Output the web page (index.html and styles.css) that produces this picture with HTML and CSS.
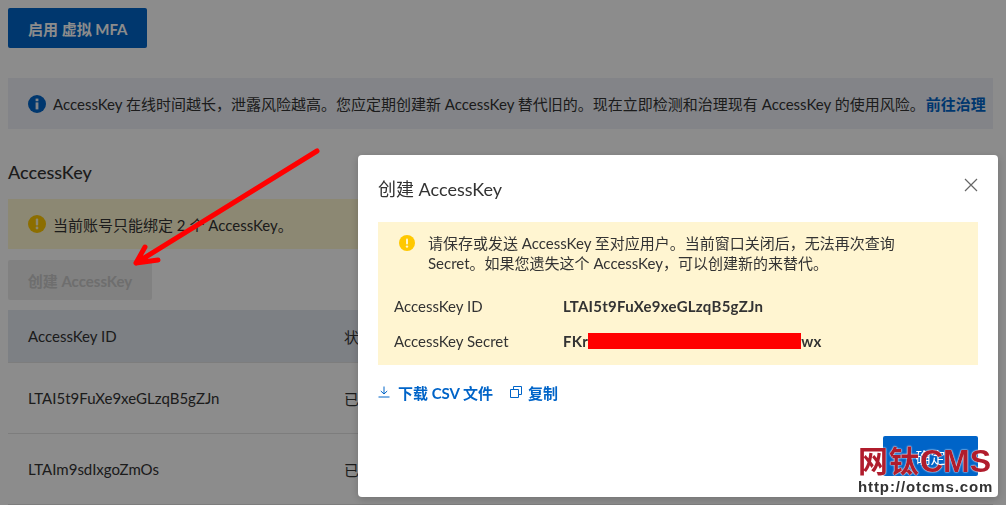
FILE: index.html
```html
<!DOCTYPE html>
<html lang="en">
<head>
    <meta charset="UTF-8">
    <meta name="viewport" content="width=device-width, initial-scale=1.0">
    <title>创建 AccessKey</title>
    <link rel="stylesheet" href="styles.css">
</head>
<body>
    <div class="page">
        <button class="btn btn-primary">启用 虚拟 MFA</button>
        <div class="notice notice-info">
            <svg class="notice-icon" viewBox="0 0 18 18"><circle cx="9" cy="9" r="9" fill="#0064c8"/><rect x="7.6" y="7.4" width="2.8" height="7" fill="#f0f3f9"/><rect x="7.6" y="3.6" width="2.8" height="2.6" fill="#f0f3f9"/></svg>
            <span>AccessKey 在线时间越长，泄露风险越高。您应定期创建新 AccessKey 替代旧的。现在立即检测和治理现有 AccessKey 的使用风险。</span>
            <a class="notice-link">前往治理</a>
        </div>
        <h2 class="section-title">AccessKey</h2>
        <div class="notice notice-warn">
            <svg class="notice-icon" viewBox="0 0 18 18"><circle cx="9" cy="9" r="9" fill="#ffc800"/><rect x="7.8" y="3.6" width="2.4" height="7" rx="1" fill="#fff7d1"/><circle cx="9" cy="13" r="1.4" fill="#fff7d1"/></svg>
            <span>当前账号只能绑定 2 个 AccessKey。</span>
        </div>
        <button class="btn btn-disabled">创建 AccessKey</button>
        <div class="table">
            <div class="table-row table-head"><span class="col-id">AccessKey ID</span><span>状态</span></div>
            <div class="table-row"><span class="col-id">LTAI5t9FuXe9xeGLzqB5gZJn</span><span>已启用</span></div>
            <div class="table-row"><span class="col-id">LTAIm9sdIxgoZmOs</span><span>已启用</span></div>
        </div>
    </div>

    <div class="mask"></div>

    <div class="dialog">
        <div class="dialog-head">
            <span class="dialog-title">创建 AccessKey</span>
            <svg class="dialog-close" viewBox="0 0 14 14"><path d="M1 1 L13 13 M13 1 L1 13" stroke="#666" stroke-width="1.2" fill="none"/></svg>
        </div>
        <div class="key-box">
            <div class="key-msg">
                <svg class="key-icon" viewBox="0 0 16 16"><circle cx="8" cy="8" r="8" fill="#ffc800"/><rect x="7" y="3.4" width="2" height="6" rx="1" fill="#fff5d1"/><circle cx="8" cy="11.6" r="1.2" fill="#fff5d1"/></svg>
                <p>请保存或发送 AccessKey 至对应用户。当前窗口关闭后，无法再次查询 Secret。如果您遗失这个 AccessKey，可以创建新的来替代。</p>
            </div>
            <div class="key-row"><span class="key-label">AccessKey ID</span><b class="key-value">LTAI5t9FuXe9xeGLzqB5gZJn</b></div>
            <div class="key-row"><span class="key-label">AccessKey Secret</span><b class="key-value">FKr<i class="redact"></i>wx</b></div>
        </div>
        <div class="dialog-links">
            <a class="dl-link">
                <svg class="dl-icon" viewBox="0 0 12 12"><path d="M6 0.5 V8 M2.8 5 L6 8 L9.2 5 M0.5 11 H11.5" stroke="#0064c8" fill="none"/></svg>
                下载 CSV 文件
            </a>
            <a class="dl-link dl-link-copy">
                <svg class="dl-icon" viewBox="0 0 12 12"><path d="M3.5 3 V0.5 H11.5 V8.5 H9 M0.5 3.5 H8.5 V11.5 H0.5 Z" stroke="#0064c8" fill="none"/></svg>
                复制
            </a>
        </div>
        <div class="dialog-foot"><button class="btn btn-ok">确定</button></div>
    </div>

    <svg class="arrow" viewBox="0 0 1006 505"><path d="M317 151 L136 263 M136 263 L145 247 M136 263 L158 260" stroke="#ff0000" stroke-width="5" stroke-linecap="round" stroke-linejoin="round" fill="none"/></svg>

    <div class="watermark">
        <div class="wm-logo"><span class="wm-cn">网钛</span>CMS</div>
        <div class="wm-url">http://otcms.com</div>
    </div>
</body>
</html>
```

FILE: styles.css
```css
* {
    box-sizing: border-box;
}

html, body {
    height: 100%;
}

body {
    margin: 0;
    overflow: hidden;
    background: #fff;
    color: #333;
    font-family: Lato, "Noto Sans CJK SC", sans-serif;
    font-size: 15px;
}

.page {
    padding: 8px 0 0 8px;
    width: 993px;
}

.btn {
    display: block;
    height: 40px;
    border: 0;
    border-radius: 2px;
    padding: 0 20px;
    font-family: inherit;
    font-size: 15px;
    font-weight: 700;
    white-space: nowrap;
}

.btn-primary {
    width: 139px;
    background: #0064c8;
    color: #fff;
}

.btn-disabled {
    width: 144px;
    margin-top: 11px;
    padding: 0;
    background: #ebebeb;
    color: #c8c8c8;
}

.notice {
    display: flex;
    align-items: center;
    height: 51px;
    padding-left: 20px;
}

.notice-info {
    margin-top: 30px;
    background: #eef1f8;
    white-space: nowrap;
}

.notice-warn {
    height: 50px;
    background: #fff7d1;
}

.notice-icon {
    width: 18px;
    height: 18px;
    margin-right: 7px;
    flex: none;
}

.notice-link {
    margin-left: 1px;
    color: #0064c8;
    font-weight: 700;
}

.section-title {
    margin: 30px 0 14px;
    height: 26px;
    font-size: 18px;
    line-height: 26px;
    font-weight: 500;
}

.table {
    margin-top: 10px;
}

.table-row {
    display: flex;
    align-items: center;
    height: 71px;
    padding-left: 20px;
    border-bottom: 1px solid #e3e3e3;
}

.table-head {
    height: 53px;
    background: #e4e9f1;
}

.col-id {
    width: 316px;
}

.mask {
    position: fixed;
    inset: 0;
    background: rgba(0, 0, 0, 0.45);
}

.dialog {
    position: fixed;
    left: 358px;
    top: 155px;
    width: 640px;
    height: 342px;
    padding: 20px;
    border-radius: 4px;
    background: #fff;
    box-shadow: 0 2px 8px rgba(0, 0, 0, 0.2);
}

.dialog-head {
    display: flex;
    justify-content: space-between;
    align-items: center;
    height: 30px;
    margin-bottom: 17px;
}

.dialog-title {
    font-size: 18px;
    margin-top: -4px;
}

.dialog-close {
    width: 14px;
    height: 14px;
    margin-top: -10px;
}

.key-box {
    height: 143px;
    padding: 11px 16px 0;
    background: #fff5d1;
}

.key-msg {
    display: flex;
    height: 55px;
}

.key-icon {
    width: 16px;
    height: 16px;
    margin: 2px 0 0 5px;
    flex: none;
}

.key-msg p {
    margin: 0 0 0 13px;
    width: 500px;
    line-height: 20px;
}

.key-row {
    display: flex;
    align-items: center;
    height: 35px;
}

.key-label {
    width: 169px;
}

.key-value {
    display: flex;
    align-items: center;
    letter-spacing: 0.25px;
}

.redact {
    display: block;
    width: 213px;
    height: 16px;
    background: #f00;
}

.dialog-links {
    display: flex;
    gap: 17px;
    margin-top: 17px;
    height: 20px;
    align-items: center;
}

.dl-link {
    display: flex;
    align-items: center;
    gap: 8px;
    color: #0064c8;
    font-weight: 700;
}

.dl-link-copy {
    gap: 6px;
}

.dl-icon {
    width: 12px;
    height: 12px;
    flex: none;
}

.dialog-foot {
    display: flex;
    justify-content: flex-end;
    margin-top: 34px;
}

.btn-ok {
    width: 95px;
    background: #0064c8;
    color: #fff;
    font-weight: 400;
}

.arrow {
    position: fixed;
    left: 0;
    top: 0;
    width: 1006px;
    height: 505px;
}

.watermark {
    position: fixed;
    left: 858px;
    top: 442px;
    width: 136px;
}

.wm-logo {
    height: 37px;
    font-family: "Liberation Sans", sans-serif;
    font-size: 32px;
    font-weight: 700;
    line-height: 34px;
    white-space: nowrap;
    color: #b01c2c;
    text-shadow: 0 0 1px #fff, 0 0 2px #fff;
}

.wm-cn {
    font-family: "Noto Sans CJK SC", sans-serif;
    font-size: 30px;
    letter-spacing: 1px;
}

.wm-url {
    font-family: "Liberation Sans", sans-serif;
    font-size: 15px;
    font-weight: 700;
    line-height: 16px;
    letter-spacing: 0.9px;
    white-space: nowrap;
    color: #333;
}
```
